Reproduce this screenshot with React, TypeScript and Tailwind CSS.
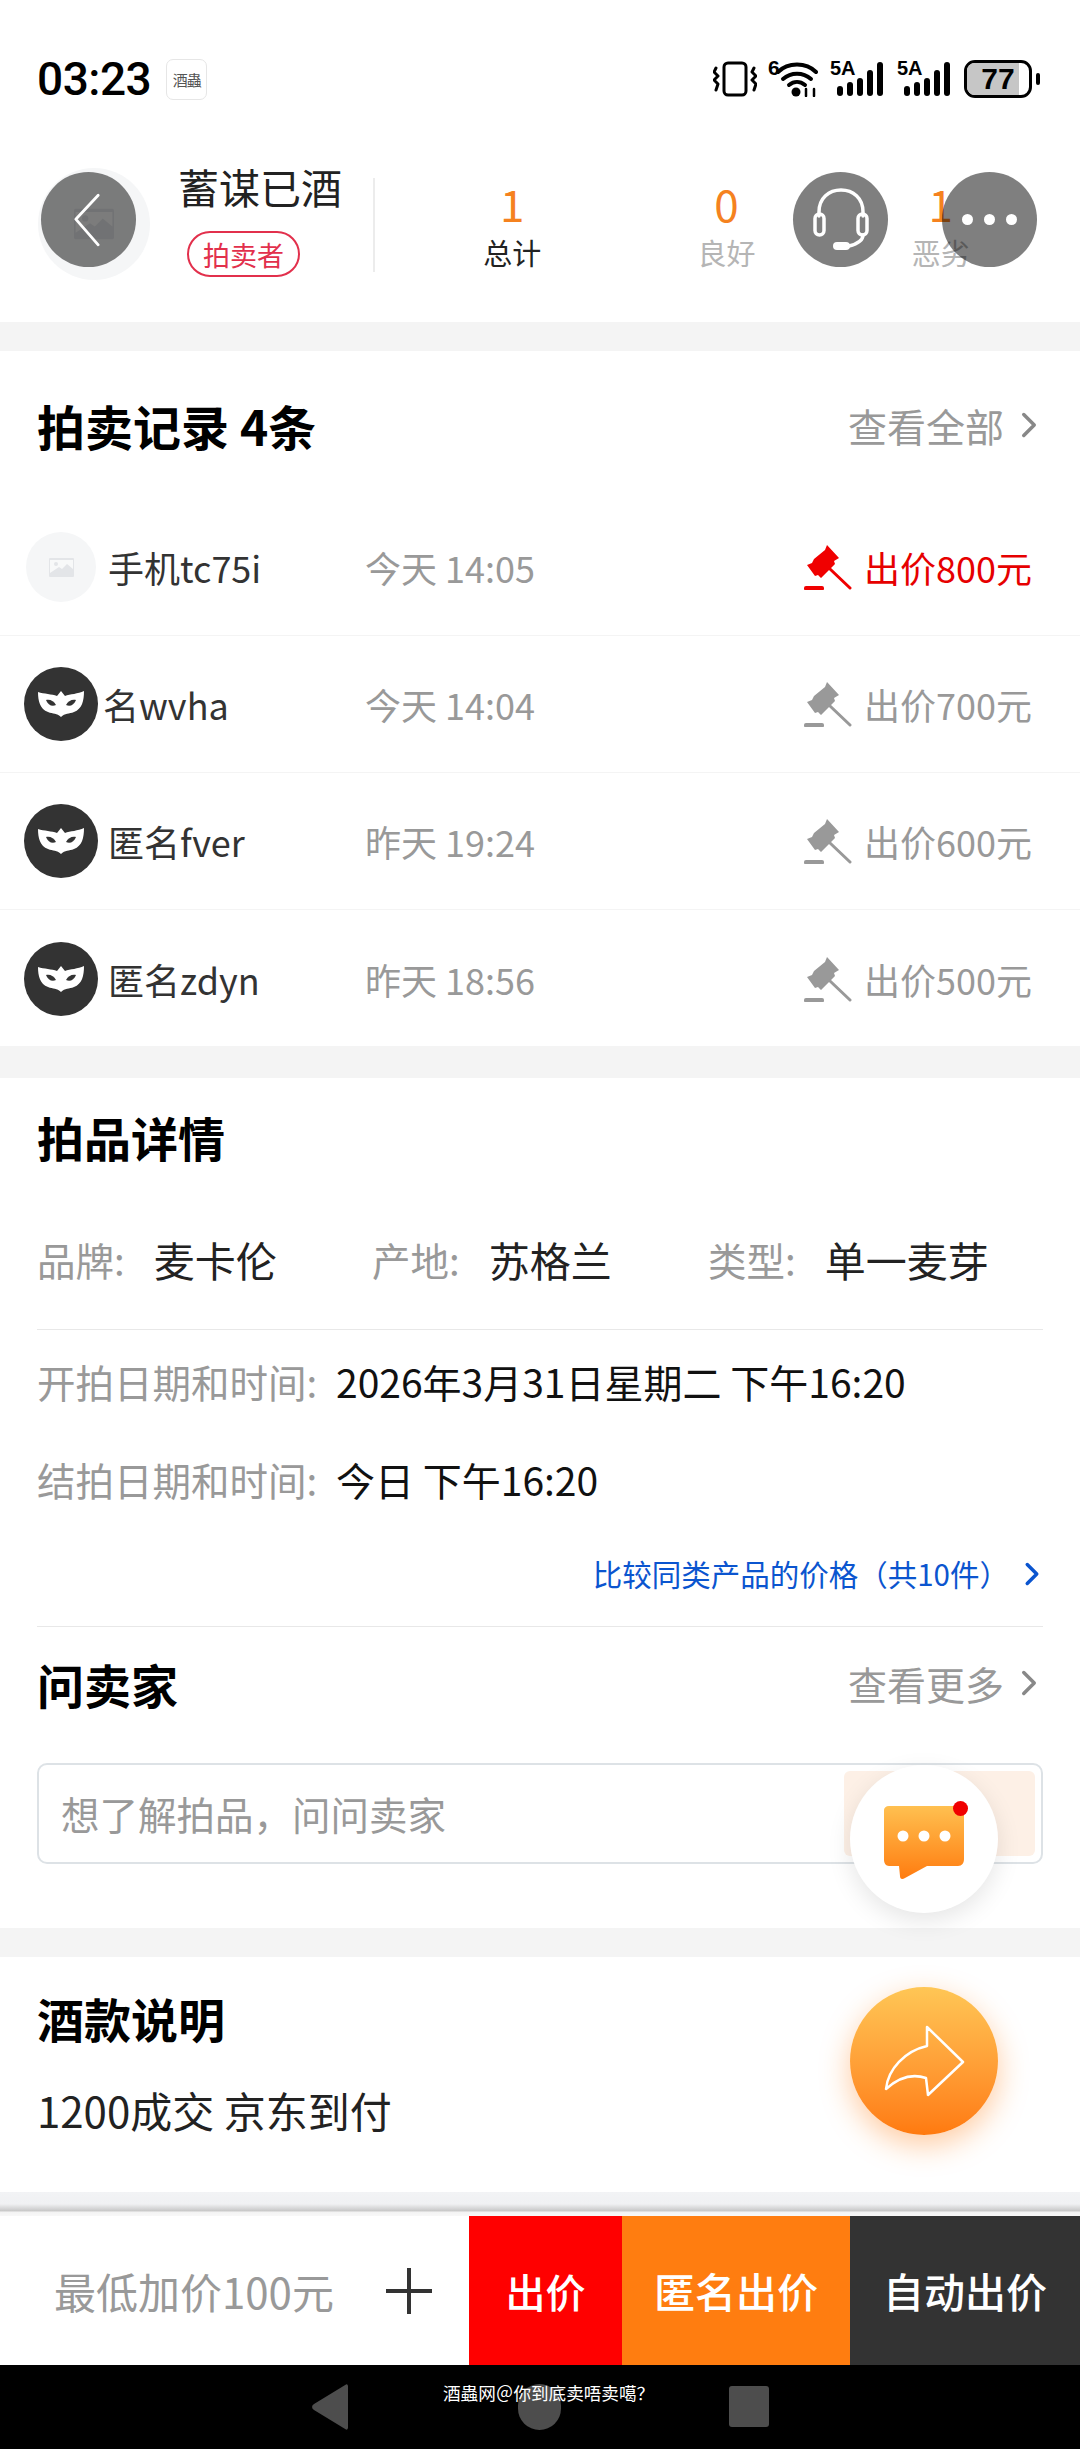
import React from "react";
import { ChevronRight } from "lucide-react";

const bids = [
  { name: "手机tc75i", time: "今天 14:05", price: "出价800元", top: true, anon: false, nameClass: "" },
  { name: "名wvha", time: "今天 14:04", price: "出价700元", top: false, anon: true, nameClass: "-ml-[5px]" },
  { name: "匿名fver", time: "昨天 19:24", price: "出价600元", top: false, anon: true, nameClass: "" },
  { name: "匿名zdyn", time: "昨天 18:56", price: "出价500元", top: false, anon: true, nameClass: "" },
];

function PictureIcon({ className, color = "#e3e5e8" }: { className?: string; color?: string }) {
  return (
    <svg viewBox="0 0 25 19" className={className}>
      <rect width="25" height="19" rx="1" fill={color} />
      <path d="M1 2h23v9l-6-5-5 5-3-2-9 6z" fill="#fff" opacity="0.75" />
      <circle cx="7" cy="6" r="2" fill={color} />
    </svg>
  );
}

function MaskAvatar() {
  return (
    <svg viewBox="0 0 74 74" className="w-[74px] h-[74px] shrink-0">
      <circle cx="37" cy="37" r="37" fill="#333333" />
      <path
        d="M14 25C20 27 28 27 33 29L37 24L41 29C46 27 54 27 60 24C60 34 58 42 50 45C45 47 41 46 37 50C33 46 29 47 24 45C16 42 14 34 14 25Z"
        fill="#fff"
      />
      <path d="M22 33C26 32 30 34 32 38C28 40 24 38 22 33Z" fill="#333333" />
      <path d="M52 33C48 32 44 34 42 38C46 40 50 38 52 33Z" fill="#333333" />
    </svg>
  );
}

function Hammer({ color }: { color: string }) {
  return (
    <svg viewBox="0 0 48 46" className="w-[48px] h-[46px] shrink-0">
      <path d="M23 1L35 14L30 17L31 20L17 34L14 31L11 32L3 21L8 19L10 15L21 6Z" fill={color} />
      <path d="M26 25L46 44" stroke={color} strokeWidth="3" strokeLinecap="round" />
      <rect x="0" y="42" width="20" height="4.5" rx="2" fill={color} />
    </svg>
  );
}

function Signal() {
  return (
    <div className="relative w-[53px] h-[36px]">
      <span className="absolute left-0 top-[-4px] text-[20px] leading-[22px] font-bold text-black font-['Liberation_Sans',sans-serif]">5A</span>
      <svg viewBox="0 0 53 36" className="w-[53px] h-[36px]">
        <rect x="7" y="25" width="6" height="10" rx="3" />
        <rect x="17" y="21" width="6" height="14" rx="3" />
        <rect x="27" y="17" width="6" height="18" rx="3" />
        <rect x="37" y="9" width="6" height="26" rx="3" />
        <rect x="47" y="1" width="6" height="34" rx="3" />
      </svg>
    </div>
  );
}

function StatusBar() {
  return (
    <div className="h-[158px] flex items-center justify-between pl-[37px] pr-[40px]">
      <div className="flex items-center">
        <span className="text-[46px] font-medium leading-none text-black tracking-[-0.5px] font-['Roboto',sans-serif]">03:23</span>
        <div className="ml-[15px] w-[41px] h-[41px] rounded-[7px] border border-[#e6e6e6] flex items-center justify-center text-[15px] leading-none tracking-[-1px] text-[#555]">
          酒蟲
        </div>
      </div>
      <div className="flex items-center h-[40px]">
        <svg viewBox="0 0 44 36" className="w-[44px] h-[36px]" fill="none" stroke="#000" strokeLinecap="round" strokeLinejoin="round">
          <rect x="11" y="2" width="22" height="32" rx="4" strokeWidth="3" />
          <path d="M3 7L1 11L5 15L1 19L5 23L3 29" strokeWidth="3" />
          <path d="M41 7L39 11L43 15L39 19L43 23L41 29" strokeWidth="3" />
        </svg>
        <div className="relative ml-[11px] w-[50px] h-[36px]">
          <span className="absolute left-0 top-[-4px] text-[21px] leading-[22px] font-bold text-black font-['Liberation_Sans',sans-serif]">6</span>
          <svg viewBox="0 0 50 36" className="w-[50px] h-[36px]" fill="none" stroke="#000" strokeLinecap="round">
            <path d="M10 11C20 1 38 1 48 11" strokeWidth="4" />
            <path d="M15 18C23 11 35 11 43 18" strokeWidth="4" />
            <path d="M21 24C26 20 32 20 37 24" strokeWidth="4" />
            <circle cx="28" cy="31" r="4.5" fill="#000" stroke="none" />
            <path d="M38 28V35M46 28V35" strokeWidth="2.5" />
          </svg>
        </div>
        <div className="ml-[12px]"><Signal /></div>
        <div className="ml-[14px]"><Signal /></div>
        <div className="ml-[14px] relative w-[68px] h-[38px] rounded-[11px] border-[3px] border-black overflow-hidden flex items-center justify-center">
          <div className="absolute left-0 top-0 bottom-0 w-[52px] bg-[#c6c6c6]" />
          <span className="relative text-[30px] leading-none font-bold text-black font-['Liberation_Sans',sans-serif]">77</span>
        </div>
        <div className="ml-[4px] w-[4px] h-[12px] rounded-full bg-black" />
      </div>
    </div>
  );
}

function SellerHeader() {
  return (
    <div className="h-[164px] flex items-start pl-[38px] pt-[10px]">
      <div className="w-[112px] h-[112px] rounded-full bg-[#f5f6f7] flex items-center justify-center shrink-0">
        <PictureIcon className="w-[40px] h-[32px]" />
      </div>
      <div className="ml-[28px] w-[195px]">
        <div className="text-[41px] leading-[44px] -mt-[4px] text-[#222]">蓄谋已酒</div>
        <div className="ml-[9px] mt-[23px] w-[113px] h-[46px] rounded-full border-2 border-[#e2304c] flex items-center justify-center text-[27px] leading-none text-[#e2304c]">
          拍卖者
        </div>
      </div>
      <div className="w-[2px] h-[94px] mt-[10px] bg-[#ececec]" />
      <div className="flex-1 grid grid-cols-3 pl-[30px] pr-[32px] mt-[10px]">
        {[
          { n: "1", label: "总计", color: "text-[#222]" },
          { n: "0", label: "良好", color: "text-[#b5b5b5]" },
          { n: "1", label: "恶劣", color: "text-[#b5b5b5]" },
        ].map((s) => (
          <div key={s.label} className="flex flex-col items-center">
            <span className="text-[44px] leading-[50px] text-[#f5821f]">{s.n}</span>
            <span className={`text-[29px] leading-[40px] mt-[4px] ${s.color}`}>{s.label}</span>
          </div>
        ))}
      </div>
    </div>
  );
}

function FloatingButtons() {
  return (
    <>
      <div className="absolute left-[41px] top-[172px] w-[95px] h-[95px] rounded-full bg-black/50 flex items-center justify-center">
        <svg viewBox="0 0 40 70" className="w-[32px] h-[56px] -ml-[4px]" fill="none" stroke="#fff" strokeWidth="3.5" strokeLinecap="round" strokeLinejoin="round">
          <path d="M34 4L6 34L34 66" />
        </svg>
      </div>
      <div className="absolute left-[793px] top-[172px] w-[95px] h-[95px] rounded-full bg-black/50 flex items-center justify-center">
        <svg viewBox="0 0 64 72" className="w-[64px] h-[72px]" fill="none" stroke="#fff" strokeWidth="3.5" strokeLinecap="round">
          <path d="M10 32V28C10 14 20 6 32 6C44 6 54 14 54 28V32" />
          <rect x="6" y="30" width="9" height="21" rx="4.5" />
          <rect x="49" y="30" width="9" height="21" rx="4.5" />
          <path d="M54 51C54 56 48 60 40 62" />
          <rect x="24" y="58" width="17" height="8" rx="4" fill="#fff" stroke="none" />
        </svg>
      </div>
      <div className="absolute left-[942px] top-[172px] w-[95px] h-[95px] rounded-full bg-black/50 flex items-center justify-center gap-[11px]">
        <span className="w-[11px] h-[11px] rounded-full bg-white" />
        <span className="w-[11px] h-[11px] rounded-full bg-white" />
        <span className="w-[11px] h-[11px] rounded-full bg-white" />
      </div>

      <div className="absolute left-[850px] top-[1765px] w-[148px] h-[148px] rounded-full bg-white shadow-[0_8px_24px_rgba(0,0,0,0.1)]">
        <svg viewBox="0 0 90 80" className="absolute left-[32px] top-[40px] w-[90px] h-[80px]">
          <defs>
            <linearGradient id="chatFill" x1="0" y1="0" x2="0" y2="1">
              <stop offset="0" stopColor="#ffc050" />
              <stop offset="1" stopColor="#ff7c10" />
            </linearGradient>
          </defs>
          <path
            d="M2 5C2 3 4 1 7 1H76C80 1 82 3 82 8V54C82 58 80 61 76 61H45L23 73C20 75 18 74 18 71L17 61H7C4 61 2 58 2 55Z"
            fill="url(#chatFill)"
          />
          <circle cx="21" cy="31" r="5.5" fill="#fff" />
          <circle cx="42" cy="31" r="5.5" fill="#fff" />
          <circle cx="63" cy="31" r="5.5" fill="#fff" />
        </svg>
        <span className="absolute left-[103px] top-[36px] w-[15px] h-[15px] rounded-full bg-[#f00000]" />
      </div>

      <div className="absolute left-[850px] top-[1987px] w-[148px] h-[148px] rounded-full bg-gradient-to-b from-[#ffc655] to-[#ff7a0e] shadow-[0_10px_30px_rgba(255,125,20,0.4)] flex items-center justify-center">
        <svg viewBox="0 0 82 72" className="w-[82px] h-[72px]" fill="none" stroke="#fff" strokeWidth="2.5" strokeLinejoin="round" strokeLinecap="round">
          <path d="M44 2L80 37L45 70L43 53C28 48 14 54 3 64C5 44 22 26 44 21Z" />
        </svg>
      </div>
    </>
  );
}

function More({ label }: { label: string }) {
  return (
    <div className="flex items-center text-[39px] leading-none text-[#999999]">
      {label}
      <ChevronRight className="w-[42px] h-[42px] ml-[4px] -mr-[7px] text-[#888]" strokeWidth={2} />
    </div>
  );
}

function Spec({ label, value, width }: { label: string; value: string; width: string }) {
  return (
    <div className={`flex items-center ${width}`}>
      <span className="text-[38.5px] leading-none text-[#999999]">{label}</span>
      <span className="ml-[29px] text-[41px] leading-none text-[#222]">{value}</span>
    </div>
  );
}

export default function App() {
  return (
    <div className="relative w-[1080px] h-[2449px] overflow-hidden bg-white font-['Noto_Sans_CJK_SC','Noto_Sans',sans-serif]">
      <StatusBar />
      <SellerHeader />
      <div className="h-[29px] bg-[#f4f4f4]" />

      <section className="h-[695px]">
        <div className="h-[148px] pl-[37px] pr-[37px] flex items-center justify-between">
          <h2 className="text-[48px] leading-none font-bold text-black">拍卖记录 4条</h2>
          <More label="查看全部" />
        </div>
        {bids.map((b, i) => (
          <div
            key={b.price}
            className={`h-[137px] flex items-center pl-[24px] pr-[48px] ${i < 3 ? "border-b border-[#f4f4f4]" : ""}`}
          >
            <div className="w-[84px] flex items-center shrink-0">
              {b.anon ? (
                <MaskAvatar />
              ) : (
                <div className="ml-[2px] w-[70px] h-[70px] rounded-full bg-[#f5f6f7] flex items-center justify-center">
                  <PictureIcon className="w-[25px] h-[19px]" />
                </div>
              )}
            </div>
            <div className="w-[257px] shrink-0">
              <div className={`text-[36px] leading-none text-[#333] ${b.nameClass}`}>{b.name}</div>
            </div>
            <span className="text-[36px] leading-none text-[#999999]">{b.time}</span>
            <div className="ml-auto flex items-center">
              <Hammer color={b.top ? "#f00000" : "#999999"} />
              <span className={`ml-[12px] text-[36px] leading-none ${b.top ? "text-[#e60000]" : "text-[#999999]"}`}>{b.price}</span>
            </div>
          </div>
        ))}
      </section>
      <div className="h-[32px] bg-[#f4f4f4]" />

      <section className="h-[850px] px-[37px]">
        <h2 className="pt-[34px] text-[47px] leading-[50px] font-bold text-black">拍品详情</h2>
        <div className="mt-[67px] flex items-center h-[60px]">
          <Spec label="品牌:" value="麦卡伦" width="w-[335px]" />
          <Spec label="产地:" value="苏格兰" width="w-[336px]" />
          <Spec label="类型:" value="单一麦芽" width="" />
        </div>
        <div className="mt-[40px] h-px bg-[#e8e8e8]" />
        <div className="mt-[29px] flex items-center h-[44px]">
          <span className="w-[299px] text-[38.5px] leading-none text-[#999999]">开拍日期和时间:</span>
          <span className="text-[39px] leading-none text-[#111]">2026年3月31日星期二 下午16:20</span>
        </div>
        <div className="mt-[54px] flex items-center h-[44px]">
          <span className="w-[299px] text-[38.5px] leading-none text-[#999999]">结拍日期和时间:</span>
          <span className="text-[39px] leading-none text-[#111]">今日 下午16:20</span>
        </div>
        <div className="mt-[53px] flex items-center justify-end h-[40px] text-[29.5px] leading-none text-[#0b55cf]">
          比较同类产品的价格（共10件）
          <ChevronRight className="w-[38px] h-[38px] ml-[4px] -mr-[8px]" strokeWidth={2.2} />
        </div>
        <div className="mt-[32px] h-px bg-[#e8e8e8]" />
        <div className="h-[136px] pb-[24px] flex items-center justify-between">
          <h2 className="text-[47px] leading-none font-bold text-black">问卖家</h2>
          <More label="查看更多" />
        </div>
        <div className="h-[101px] rounded-[10px] border-2 border-[#dde2e6] flex items-center justify-between pl-[22px] pr-[6px]">
          <span className="text-[38.5px] leading-none text-[#999999]">想了解拍品，问问卖家</span>
          <div className="w-[191px] h-[85px] rounded-[6px] bg-[#fdf0e6]" />
        </div>
      </section>
      <div className="h-[29px] bg-[#f4f4f4]" />

      <section className="h-[235px] px-[37px]">
        <h2 className="pt-[36px] text-[47px] leading-[50px] font-bold text-black">酒款说明</h2>
        <p className="mt-[44px] text-[42px] leading-[46px] text-[#222]">1200成交 京东到付</p>
      </section>

      <div className="h-[24px] bg-[linear-gradient(#f2f3f5_0%,#f0f1f3_50%,#c8c8c8_78%,#f3f3f3_84%,#f8f8f8_100%)]" />

      <div className="h-[149px] flex">
        <div className="w-[469px] flex items-center pl-[54px]">
          <span className="text-[42px] leading-none text-[#999999] whitespace-nowrap">最低加价100元</span>
          <svg viewBox="0 0 46 46" className="ml-[52px] w-[46px] h-[46px] shrink-0">
            <path d="M0 23H46M23 0V46" stroke="#333" strokeWidth="4" />
          </svg>
        </div>
        <div className="w-[153px] bg-[#ff0000] flex items-center justify-center text-[40px] font-medium leading-none text-white">出价</div>
        <div className="w-[228px] bg-[#ff7d10] flex items-center justify-center text-[41px] font-medium leading-none text-white">匿名出价</div>
        <div className="flex-1 bg-[#333333] flex items-center justify-center text-[41px] font-medium leading-none text-white">自动出价</div>
      </div>

      <div className="relative h-[84px] bg-black flex items-center pl-[312px] pb-[1px]">
        <svg viewBox="0 0 36 46" className="w-[36px] h-[46px] shrink-0">
          <path d="M34 0.5C35 0 36 1 36 2.5V43.5C36 45 35 46 34 45.5L2 26C-0.5 24.5 -0.5 21.5 2 20Z" fill="#4d4d4d" />
        </svg>
        <div className="ml-[170px] w-[43px] h-[46px] rounded-full bg-[#4d4d4d]" />
        <div className="ml-[168px] w-[40px] h-[41px] rounded-[3px] bg-[#4d4d4d]" />
        <span className="absolute left-[443px] top-[18px] text-[17.6px] leading-[20px] text-white whitespace-nowrap">酒蟲网＠你到底卖唔卖噶？</span>
      </div>

      <FloatingButtons />
    </div>
  );
}
